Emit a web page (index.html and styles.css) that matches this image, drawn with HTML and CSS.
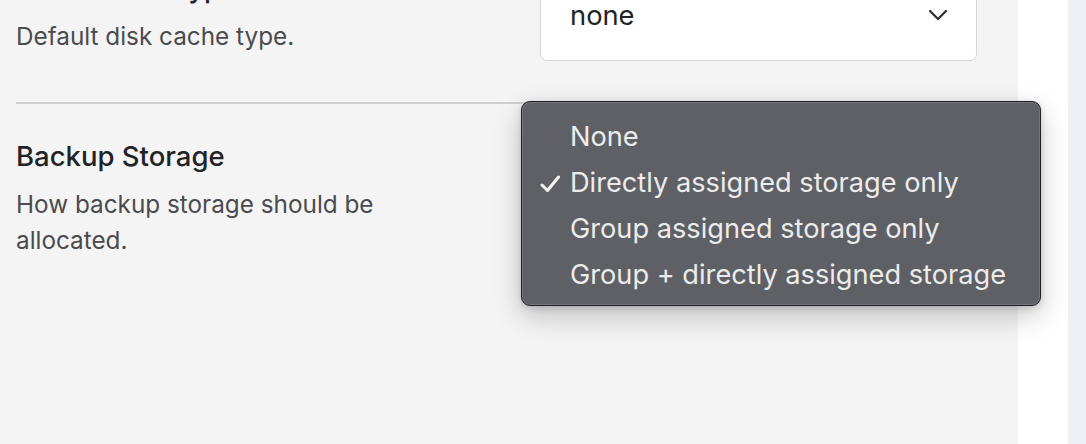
FILE: index.html
```html
<!DOCTYPE html>
<html>
<head>
<meta charset="utf-8">
<link rel="stylesheet" href="styles.css">
</head>
<body>
<div class="app">
  <main class="panel">
    <section class="setting first">
      <div class="info">
        <h3 class="title">Disk Cache Type</h3>
        <p class="desc">Default disk cache type.</p>
      </div>
      <div class="control">
        <div class="select">
          <span class="value">none</span>
          <svg class="chevron" width="20" height="12" viewBox="0 0 20 12"><path d="M2 2 L10 10 L18 2" fill="none" stroke="#2b2d30" stroke-width="2.2" stroke-linecap="round" stroke-linejoin="round"/></svg>
        </div>
      </div>
    </section>
    <hr class="divider">
    <section class="setting">
      <div class="info">
        <h3 class="title">Backup Storage</h3>
        <p class="desc">How backup storage should be<br>allocated.</p>
      </div>
      <div class="control"></div>
    </section>
    <ul class="menu">
      <li class="item">None</li>
      <li class="item checked"><svg class="check" width="21" height="18" viewBox="0 0 21 18"><path d="M2 10 L7.5 15.5 L18.5 2" fill="none" stroke="#f4f4f4" stroke-width="3" stroke-linecap="round" stroke-linejoin="round"/></svg>Directly assigned storage only</li>
      <li class="item">Group assigned storage only</li>
      <li class="item">Group + directly assigned storage</li>
    </ul>
  </main>
  <div class="gutter"></div>
  <div class="rail"></div>
</div>
</body>
</html>
```
FILE: styles.css
```css
html, body {
  margin: 0;
  padding: 0;
  height: 100%;
  overflow: hidden;
}
body {
  font-family: Inter, "Noto Sans", "Liberation Sans", sans-serif;
}
.app {
  display: flex;
  height: 444px;
}
.panel {
  position: relative;
  width: 1018px;
  flex: none;
  background: #f4f4f4;
  box-sizing: border-box;
  padding: 0 41px 0 16px;
}
.gutter {
  width: 50px;
  flex: none;
  background: #ffffff;
}
.rail {
  flex: 1;
  background: #eff0f5;
}
.setting {
  display: grid;
  grid-template-columns: 1fr 437px;
  column-gap: 24px;
  align-items: start;
}
.setting.first {
  margin-top: -30px;
}
.title {
  margin: 0;
  font-size: 27.5px;
  font-weight: 500;
  line-height: 36px;
  color: #222326;
}
.desc {
  margin: 12px 0 0 0;
  font-size: 24.3px;
  line-height: 36px;
  color: #4a4b4e;
}
.select {
  height: 91px;
  box-sizing: border-box;
  background: #ffffff;
  border: 1.5px solid #d3d7dc;
  border-radius: 7px;
  display: flex;
  align-items: flex-start;
  justify-content: space-between;
  padding: 28px 28px 0 29px;
}
.value {
  font-size: 27.3px;
  line-height: 34px;
  color: #222326;
}
.chevron {
  margin-top: 10px;
}
.divider {
  border: 0;
  height: 2px;
  background: #d0d0d0;
  margin: 41px 0 34px 0;
}
.menu {
  position: absolute;
  left: 521px;
  top: 101px;
  width: 520px;
  height: 205px;
  box-sizing: border-box;
  margin: 0;
  padding: 12px 0 0 0;
  list-style: none;
  background: #5e6065;
  border: 1px solid #1f2023;
  border-radius: 9px;
  box-shadow: inset 0 0 0 1px #75777c, 0 10px 28px rgba(0,0,0,0.22), 0 2px 6px rgba(0,0,0,0.15);
}
.item {
  position: relative;
  padding-left: 48px;
  font-size: 27.2px;
  line-height: 46px;
  height: 46px;
  color: #ececec;
  white-space: nowrap;
}
.check {
  position: absolute;
  left: 18px;
  top: 15px;
}
```
